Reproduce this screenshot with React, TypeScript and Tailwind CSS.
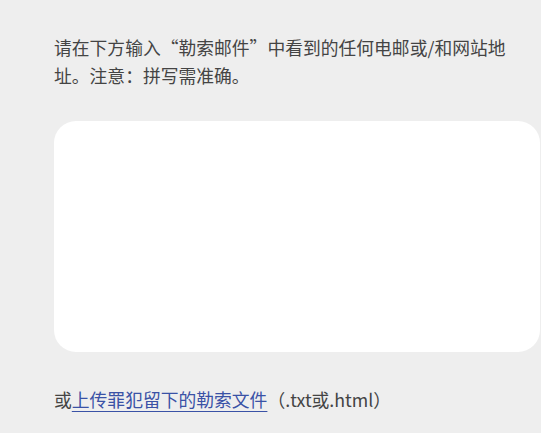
export default function App() {
  return (
    <div
      className="w-[541px] h-[433px] bg-[#eeeeee] pl-[54px] pt-[33px] overflow-hidden"
      style={{ fontFamily: '"Noto Sans CJK SC", "Noto Sans", sans-serif' }}
    >
      <p className="text-[17.8px] leading-[28px] text-[#444444] w-[466px]">
        请在下方输入“勒索邮件”中看到的任何电邮或/和网站地址。注意：拼写需准确。
      </p>
      <div className="mt-[32px] w-[486px] h-[231px] bg-white rounded-[22px]" />
      <p className="mt-[33px] text-[17.8px] leading-[28px] text-[#444444]">
        或
        <a className="text-[#3a52a6] underline underline-offset-[4px] decoration-1 decoration-[#3a52a6]">
          上传罪犯留下的勒索文件
        </a>
        （.txt或.html）
      </p>
    </div>
  );
}
